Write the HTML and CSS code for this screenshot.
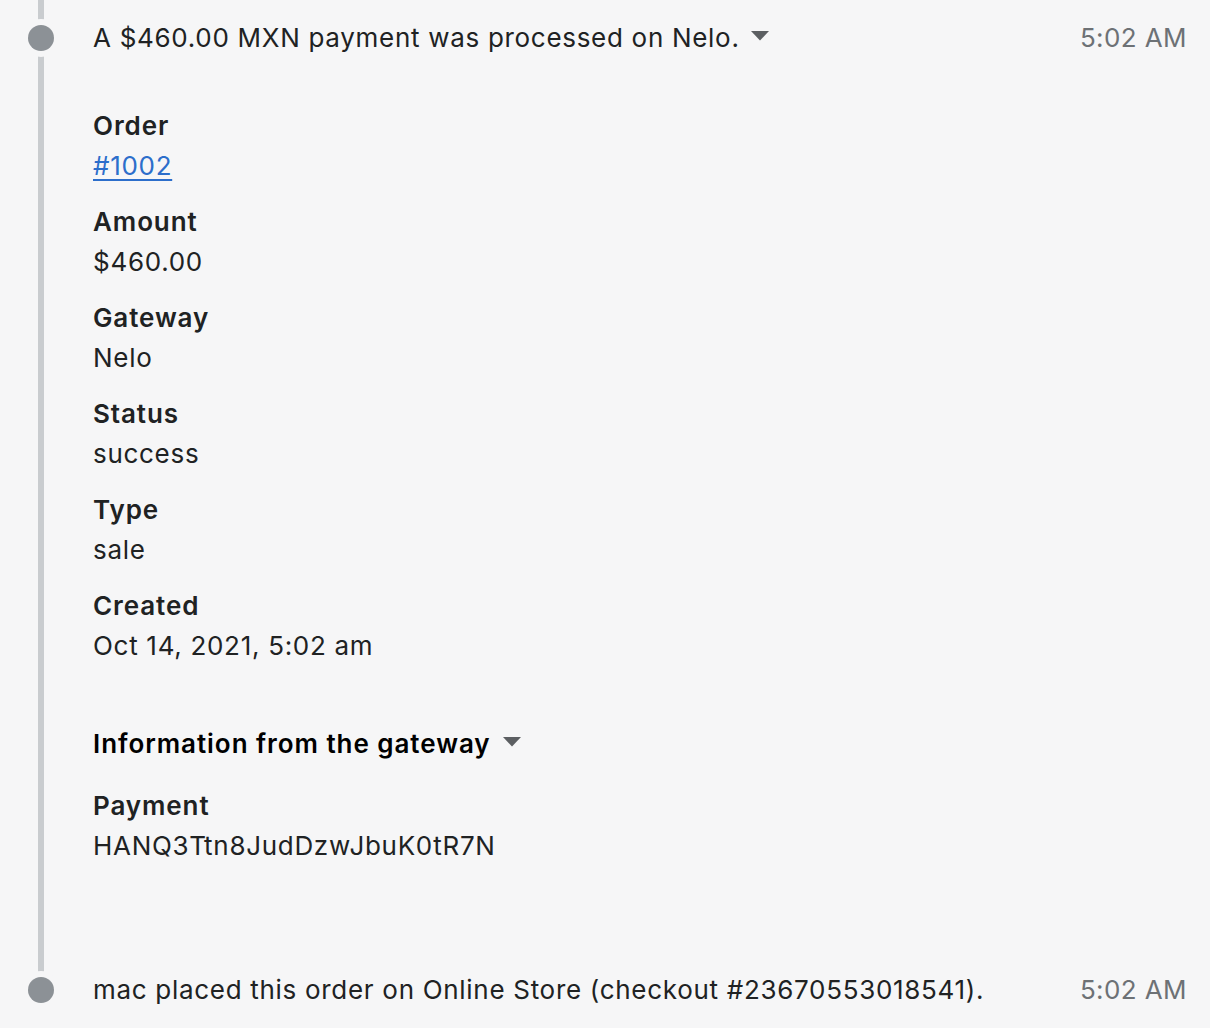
FILE: index.html
```html
<!DOCTYPE html>
<html lang="en">
<head>
<meta charset="utf-8">
<title>Timeline</title>
<link rel="stylesheet" href="styles.css">
</head>
<body>
<div class="timeline">
  <div class="event">
    <span class="dot"></span>
    <div class="event-row">
      <div class="event-text">A $460.00 MXN payment was processed on Nelo.
        <svg class="caret" width="18" height="10" viewBox="0 0 18 10"><path d="M0 0h18L9 9.5z" fill="#5c5f62"/></svg>
      </div>
      <div class="event-time">5:02 AM</div>
    </div>
    <div class="details">
      <dl class="fields">
        <div class="field"><dt>Order</dt><dd><a href="#">#1002</a></dd></div>
        <div class="field"><dt>Amount</dt><dd>$460.00</dd></div>
        <div class="field"><dt>Gateway</dt><dd>Nelo</dd></div>
        <div class="field"><dt>Status</dt><dd>success</dd></div>
        <div class="field"><dt>Type</dt><dd>sale</dd></div>
        <div class="field"><dt>Created</dt><dd>Oct 14, 2021, 5:02 am</dd></div>
      </dl>
      <div class="gateway-head">Information from the gateway
        <svg class="caret" width="18" height="10" viewBox="0 0 18 10"><path d="M0 0h18L9 9.5z" fill="#5c5f62"/></svg>
      </div>
      <dl class="fields">
        <div class="field"><dt>Payment</dt><dd>HANQ3Ttn8JudDzwJbuK0tR7N</dd></div>
      </dl>
    </div>
  </div>
  <div class="event last">
    <span class="dot"></span>
    <div class="event-row">
      <div class="event-text">mac placed this order on Online Store (checkout #23670553018541).</div>
      <div class="event-time">5:02 AM</div>
    </div>
  </div>
</div>
</body>
</html>
```
FILE: styles.css
```css
html, body {
  margin: 0;
  padding: 0;
  background: #f6f6f7;
}
body {
  font-family: Inter, "Noto Sans", "Liberation Sans", sans-serif;
  font-size: 26px;
  line-height: 40px;
  letter-spacing: 0.7px;
  color: #202223;
}
.timeline {
  position: relative;
  padding: 18px 23px 18px 93px;
}
.timeline::before {
  content: "";
  position: absolute;
  left: 38px;
  top: 0;
  height: 972px;
  width: 6px;
  background: #c9cccf;
}
.event {
  position: relative;
}
.event.last {
  margin-top: 104px;
}
.dot {
  position: absolute;
  left: -65px;
  top: 7px;
  width: 26px;
  height: 26px;
  border-radius: 50%;
  background: #8c9196;
  box-shadow: 0 0 0 6px #f6f6f7;
}
.event-row {
  display: flex;
  justify-content: space-between;
  align-items: center;
}
.event-text {
  display: flex;
  align-items: center;
  gap: 11px;
}
.event-time {
  color: #6d7175;
  letter-spacing: 0.4px;
}
.caret {
  display: block;
  margin-top: -4px;
}
.details {
  padding-top: 48px;
}
.fields {
  margin: 0;
  display: flex;
  flex-direction: column;
  gap: 16px;
}
.fields dt {
  font-weight: 600;
  letter-spacing: 0.9px;
}
.fields dd {
  margin: 0;
}
.fields a {
  color: #2c6ecb;
  text-decoration: underline;
  text-underline-offset: 4px;
  text-decoration-thickness: 2px;
}
.gateway-head {
  margin-top: 58px;
  margin-bottom: 22px;
  font-weight: 600;
  letter-spacing: 0.95px;
  color: #000;
  display: flex;
  align-items: center;
  gap: 12px;
}
```
